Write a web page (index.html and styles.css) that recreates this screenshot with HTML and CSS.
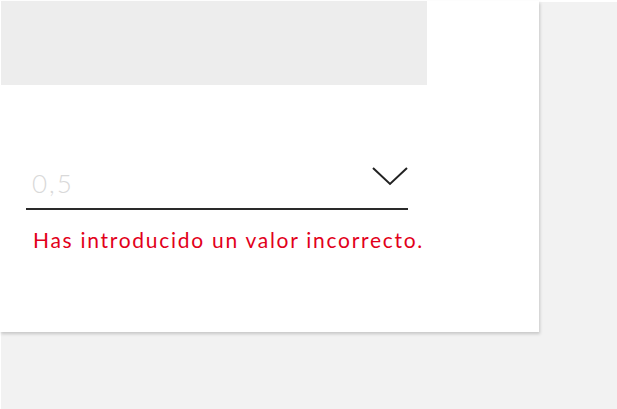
FILE: index.html
```html
<!DOCTYPE html>
<html lang="es">
<head>
<meta charset="utf-8">
<link rel="stylesheet" href="styles.css">
</head>
<body>
<div class="page">
  <div class="card">
    <div class="banner"></div>
    <div class="field">
      <div class="select">
        <span class="placeholder">0,5</span>
        <svg class="chevron" width="36" height="20" viewBox="0 0 36 20"><path d="M1 2 L18 18 L35 2" fill="none" stroke="#222" stroke-width="2"/></svg>
      </div>
      <p class="error">Has introducido un valor incorrecto.</p>
    </div>
  </div>
</div>
</body>
</html>
```
FILE: styles.css
```css
html, body { margin: 0; padding: 0; }
body { background: #fff; font-family: Lato, "Liberation Sans", sans-serif; }
.page {
  width: 616px; height: 407px;
  margin: 2px 0 0 1px;
  background: #f2f2f2;
}
.card {
  width: 539px; height: 331px;
  margin-left: -1px;
  position: relative; top: -1px;
  background: #fff;
  box-shadow: 1px 2px 3px rgba(0,0,0,0.18);
}
.banner { width: 426px; height: 84px; background: #ededed; margin-left: 1px; }
.field { padding: 78px 0 0 26px; width: 382px; }
.select {
  display: flex; justify-content: space-between; align-items: flex-end;
  height: 47px; border-bottom: 2px solid #2a2a2a; box-sizing: border-box;
  padding: 0 0 12px 6px;
}
.placeholder { font-size: 26px; font-weight: 300; color: #d9d9d9; line-height: 25px; letter-spacing: 2px; }
.chevron { margin-bottom: 10px; }
.error { margin: 18px 0 0 7px; color: #e2001a; font-size: 21px; line-height: 24px; letter-spacing: 1.72px; white-space: nowrap; }
```
